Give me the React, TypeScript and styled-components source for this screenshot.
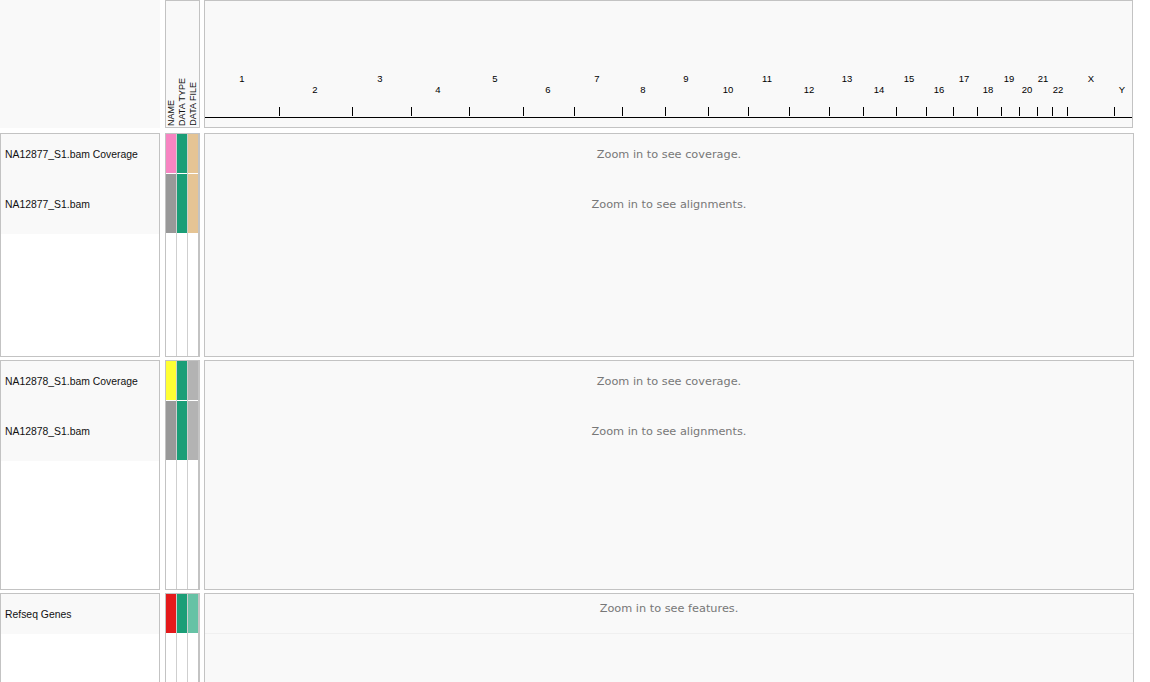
import React from "react";
import styled, { createGlobalStyle } from "styled-components";

const GlobalStyle = createGlobalStyle`
  html, body { margin: 0; padding: 0; background: #ffffff; overflow: hidden; }
  body { font-family: "Liberation Sans", Arial, sans-serif; }
`;

const BORDER = "#c3c3c3";

const Page = styled.div`
  display: flex;
  flex-direction: column;
  width: 1150px;
  height: 682px;
  overflow: hidden;
`;

const HeaderRow = styled.div`
  display: flex;
  height: 128px;
  flex: none;
  margin-bottom: 5px;
`;

const NameHeader = styled.div`
  width: 160px;
  flex: none;
  background: #f9f9f9;
`;

const AttrHeader = styled.div`
  width: 35px;
  flex: none;
  margin-left: 5px;
  box-sizing: border-box;
  border: 1px solid ${BORDER};
  background: #f9f9f9;
  display: flex;
  align-items: flex-end;
  padding-bottom: 1px;
`;

const AttrLabel = styled.div`
  width: 11px;
  flex: none;
  writing-mode: vertical-rl;
  transform: rotate(180deg);
  font-family: "Liberation Sans", Arial, sans-serif;
  font-size: 9px;
  line-height: 11px;
  color: #111;
  white-space: nowrap;
  text-align: left;
`;

const RulerBox = styled.div`
  width: 929px;
  flex: none;
  margin-left: 4px;
  box-sizing: border-box;
  border: 1px solid ${BORDER};
  background: #f9f9f9;
  svg { display: block; }
`;

const TrackPanel = styled.div<{ $h: number }>`
  display: flex;
  height: ${(p) => p.$h}px;
  flex: none;
  margin-bottom: 3px;
`;

const NamePanel = styled.div`
  width: 160px;
  flex: none;
  box-sizing: border-box;
  border: 1px solid ${BORDER};
  background: #ffffff;
  display: flex;
  flex-direction: column;
`;

const NameRow = styled.div<{ $h: number }>`
  height: ${(p) => p.$h}px;
  flex: none;
  background: #f9f9f9;
  display: flex;
  align-items: center;
  padding-left: 4px;
  font-family: "Liberation Sans", Arial, sans-serif;
  font-size: 10.4px;
  color: #111;
  white-space: nowrap;
`;

const AttrPanel = styled.div`
  width: 35px;
  flex: none;
  margin-left: 5px;
  box-sizing: border-box;
  border: 1px solid ${BORDER};
  border-right-width: 2px;
  background: #ffffff;
  display: flex;
`;

const AttrColumn = styled.div`
  width: 11px;
  flex: none;
  box-sizing: border-box;
  border-right: 1px solid #cfcfcf;
  display: flex;
  flex-direction: column;
  &:last-child { width: 10px; border-right: none; }
`;

const AttrCell = styled.div<{ $h: number; $c: string }>`
  height: ${(p) => p.$h}px;
  flex: none;
  box-sizing: border-box;
  background: ${(p) => p.$c};
  border-bottom: 1px solid #ffffff;
`;

const DataPanel = styled.div`
  width: 930px;
  flex: none;
  margin-left: 4px;
  box-sizing: border-box;
  border: 1px solid ${BORDER};
  background: #f9f9f9;
  display: flex;
  flex-direction: column;
`;

const DataRow = styled.div<{ $h: number; $top?: boolean }>`
  height: ${(p) => p.$h}px;
  flex: none;
  box-sizing: border-box;
  display: flex;
  justify-content: center;
  align-items: ${(p) => (p.$top ? "flex-start" : "center")};
  padding-top: ${(p) => (p.$top ? "8px" : "0")};
  border-bottom: ${(p) => (p.$top ? "1px solid #f0f0f0" : "none")};
  font-family: "DejaVu Sans", "Liberation Sans", sans-serif;
  font-size: 11.3px;
  color: #777777;
`;

type Track = { name: string; h: number; attrs: string[]; msg: string; top?: boolean };

const panels: { h: number; tracks: Track[] }[] = [
  {
    h: 224,
    tracks: [
      { name: "NA12877_S1.bam Coverage", h: 40, attrs: ["#f785c2", "#1b9e77", "#e5c494"], msg: "Zoom in to see coverage." },
      { name: "NA12877_S1.bam", h: 60, attrs: ["#999999", "#1b9e77", "#e5c494"], msg: "Zoom in to see alignments." },
    ],
  },
  {
    h: 230,
    tracks: [
      { name: "NA12878_S1.bam Coverage", h: 40, attrs: ["#ffff33", "#1b9e77", "#b3b3b3"], msg: "Zoom in to see coverage." },
      { name: "NA12878_S1.bam", h: 60, attrs: ["#999999", "#1b9e77", "#b3b3b3"], msg: "Zoom in to see alignments." },
    ],
  },
  {
    h: 120,
    tracks: [
      { name: "Refseq Genes", h: 40, attrs: ["#e41a1c", "#1b9e77", "#66c2a5"], msg: "Zoom in to see features.", top: true },
    ],
  },
];

const ticks = [279, 352, 411, 469, 523, 574, 622, 665, 708, 748, 789, 829, 863, 896, 926, 953, 977, 1001, 1019, 1037, 1052, 1067, 1114];

const labels: [string, number, number][] = [
  ["1", 242, 0], ["2", 315, 1], ["3", 380, 0], ["4", 438, 1], ["5", 495, 0], ["6", 548, 1],
  ["7", 597, 0], ["8", 643, 1], ["9", 686, 0], ["10", 728, 1], ["11", 767, 0], ["12", 809, 1],
  ["13", 847, 0], ["14", 879, 1], ["15", 909, 0], ["16", 939, 1], ["17", 964, 0], ["18", 988, 1],
  ["19", 1009, 0], ["20", 1027, 1], ["21", 1043, 0], ["22", 1058, 1], ["X", 1091, 0], ["Y", 1122, 1],
];

const OX = 205;
const OY = 1;

function Ruler() {
  return (
    <svg width={927} height={126} viewBox="0 0 927 126">
      <line x1={0} x2={927} y1={117 - OY + 0.5} y2={117 - OY + 0.5} stroke="#000" strokeWidth={1.2} />
      {ticks.map((x) => (
        <line key={x} x1={x - OX + 0.5} x2={x - OX + 0.5} y1={107 - OY} y2={116 - OY} stroke="#000" strokeWidth={1} />
      ))}
      {labels.map(([t, x, r]) => (
        <text
          key={t}
          x={x - OX}
          y={(r === 0 ? 81.5 : 92.5) - OY}
          textAnchor="middle"
          fontFamily="Liberation Sans, Arial, sans-serif"
          fontSize={9.5}
          fill="#000"
        >
          {t}
        </text>
      ))}
    </svg>
  );
}

export default function App() {
  return (
    <>
      <GlobalStyle />
      <Page>
        <HeaderRow>
          <NameHeader />
          <AttrHeader>
            <AttrLabel>NAME</AttrLabel>
            <AttrLabel>DATA TYPE</AttrLabel>
            <AttrLabel>DATA FILE</AttrLabel>
          </AttrHeader>
          <RulerBox>
            <Ruler />
          </RulerBox>
        </HeaderRow>
        {panels.map((p, pi) => (
          <TrackPanel key={pi} $h={p.h}>
            <NamePanel>
              {p.tracks.map((t) => (
                <NameRow key={t.name} $h={t.h}>{t.name}</NameRow>
              ))}
            </NamePanel>
            <AttrPanel>
              {[0, 1, 2].map((ci) => (
                <AttrColumn key={ci}>
                  {p.tracks.map((t) => (
                    <AttrCell key={t.name} $h={t.h} $c={t.attrs[ci]} />
                  ))}
                </AttrColumn>
              ))}
            </AttrPanel>
            <DataPanel>
              {p.tracks.map((t) => (
                <DataRow key={t.name} $h={t.h} $top={t.top}>{t.msg}</DataRow>
              ))}
            </DataPanel>
          </TrackPanel>
        ))}
      </Page>
    </>
  );
}
